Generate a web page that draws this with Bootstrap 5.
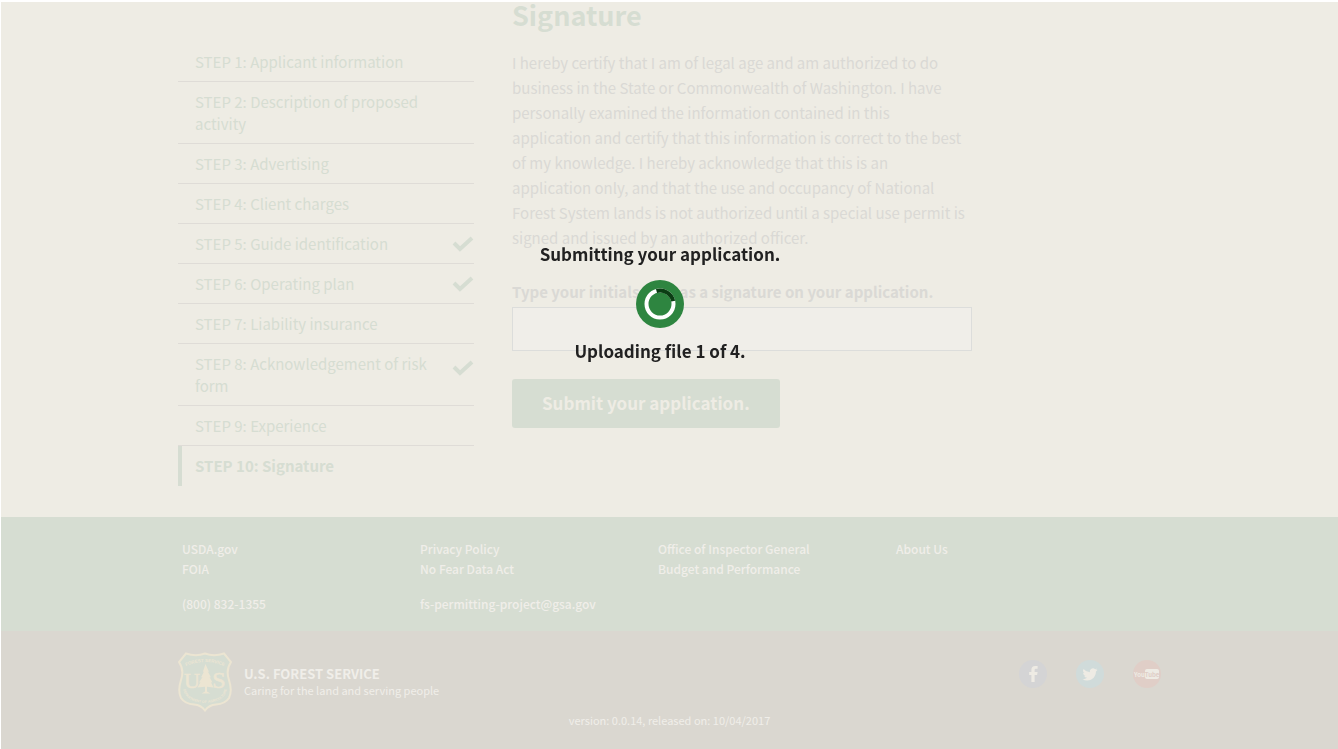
<!DOCTYPE html>
<html lang="en">
<head>
<meta charset="utf-8">
<meta name="viewport" content="width=device-width, initial-scale=1">
<title>Signature - U.S. Forest Service permits</title>
<link href="https://cdn.jsdelivr.net/npm/bootstrap@5.3.0/dist/css/bootstrap.min.css" rel="stylesheet">
<style>
  :root {
    --sand: #eeece4;
    --leaf: #d6ddd2;
    --stone: #dad7d0;
    --ink: #dad9d5;
    --paper: #f0eee9;
  }
  body {
    font-family: "Noto Sans CJK SC", "Open Sans", sans-serif;
    font-size: 15px;
    line-height: 25px;
    color: var(--ink);
    background: #fff;
    padding: 2px 0 0 1px;
    min-height: 100vh;
  }
  a { color: inherit; text-decoration: none; }
  .page { background: var(--sand); }
  .wrap { width: 100%; max-width: 983px; margin: 0 auto; }
  .form-area { gap: 38px; padding-bottom: 31px; }
  .steps { width: 296px; padding-top: 40px; color: var(--leaf); }
  .steps a {
    min-height: 40px;
    padding: 9px 0 8px 17px;
    line-height: 22px;
    border-bottom: 1px solid #dfdcd7;
  }
  .steps a span { max-width: 246px; }
  .steps a svg { margin: 2px 0; }
  .steps a.current {
    padding-left: 13px;
    border-left: 4px solid var(--leaf);
    border-bottom: 0;
    font-weight: 700;
  }
  .signature { flex: 0 1 460px; }
  .signature h1 { font-size: 27px; line-height: 26px; font-weight: 700; color: var(--leaf); margin-bottom: 22px; }
  .signature p { margin-bottom: 29px; padding-right: 4px; }
  .signature label { font-weight: 700; margin-bottom: 3px; }
  .signature .form-control { height: 44px; border: 1px solid #dcdddb; border-radius: 0; background: var(--paper); }
  .btn-submit, .btn-submit:hover {
    margin-top: 28px;
    height: 49px;
    padding: 0 30px 2px;
    border: 0;
    border-radius: 3px;
    background: var(--leaf);
    color: var(--sand);
    font-size: 17px;
    font-weight: 700;
  }
  .foot-links { background: var(--leaf); color: var(--paper); font-size: 12px; font-weight: 500; line-height: 20px; padding: 22px 0 17px; }
  .foot-links .row { max-width: 952px; row-gap: 15px; }
  .foot-links .row > div { padding: 0 4px; }
  .foot-brand { background: var(--stone); color: var(--paper); padding: 21px 0 19px; line-height: 17px; }
  .brand-name { font-size: 13px; font-weight: 700; }
  .brand-motto, .version { font-size: 11px; }
  .social { gap: 29px; margin-top: 8px; }
  .social svg, .brand svg { display: block; }
  .busy { position: fixed; inset: 0; padding: 241px 18px 0 0; color: #212121; font-size: 17px; font-weight: 700; z-index: 10; }
  .spinner { margin: 14px 0 10px; }
</style>
</head>
<body class="d-flex flex-column">
<main class="page">
  <div class="wrap d-flex form-area">
    <nav class="steps d-flex flex-column flex-shrink-0" aria-label="Application steps">
      <a href="#s1">STEP 1: Applicant information</a>
      <a href="#s2"><span class="d-block">STEP 2: Description of proposed activity</span></a>
      <a href="#s3">STEP 3: Advertising</a>
      <a href="#s4">STEP 4: Client charges</a>
      <a href="#s5" class="d-flex justify-content-between align-items-start"><span>STEP 5: Guide identification</span><svg width="22" height="18" viewBox="0 0 22 18" class="flex-shrink-0"><path d="M2 8l6 6L20 3" fill="none" stroke="#d6ddd2" stroke-width="4"/></svg></a>
      <a href="#s6" class="d-flex justify-content-between align-items-start"><span>STEP 6: Operating plan</span><svg width="22" height="18" viewBox="0 0 22 18" class="flex-shrink-0"><path d="M2 8l6 6L20 3" fill="none" stroke="#d6ddd2" stroke-width="4"/></svg></a>
      <a href="#s7">STEP 7: Liability insurance</a>
      <a href="#s8" class="d-flex justify-content-between align-items-start"><span>STEP 8: Acknowledgement of risk form</span><svg width="22" height="26" viewBox="0 0 22 26" class="flex-shrink-0"><path d="M2 12l6 6L20 7" fill="none" stroke="#d6ddd2" stroke-width="4"/></svg></a>
      <a href="#s9">STEP 9: Experience</a>
      <a href="#s10" class="current" aria-current="step">STEP 10: Signature</a>
    </nav>
    <form class="signature">
      <h1>Signature</h1>
      <p>I hereby certify that I am of legal age and am authorized to do business in the State or Commonwealth of Washington. I have personally examined the information contained in this application and certify that this information is correct to the best of my knowledge. I hereby acknowledge that this is an application only, and that the use and occupancy of National Forest System lands is not authorized until a special use permit is signed and issued by an authorized officer.</p>
      <label for="initials" class="d-block">Type your initials here as a signature on your application.</label>
      <input id="initials" type="text" class="form-control">
      <button type="button" class="btn btn-submit">Submit your application.</button>
    </form>
  </div>
</main>
<footer class="flex-grow-1 d-flex flex-column">
  <div class="foot-links">
    <div class="wrap">
      <div class="row gx-0">
        <div class="col-3"><a class="d-block" href="#usda">USDA.gov</a><a class="d-block" href="#foia">FOIA</a></div>
        <div class="col-3"><a class="d-block" href="#privacy">Privacy Policy</a><a class="d-block" href="#nofear">No Fear Data Act</a></div>
        <div class="col-3"><a class="d-block" href="#oig">Office of Inspector General</a><a class="d-block" href="#budget">Budget and Performance</a></div>
        <div class="col-3"><a class="d-block" href="#about">About Us</a></div>
        <div class="col-3"><a href="tel:8008321355">(800) 832-1355</a></div>
        <div class="col-3"><a href="mailto:fs-permitting-project@gsa.gov">fs-permitting-project@gsa.gov</a></div>
      </div>
    </div>
  </div>
  <div class="foot-brand flex-grow-1">
    <div class="wrap d-flex justify-content-between align-items-start">
      <div class="brand d-flex align-items-center">
        <svg width="54" height="60" viewBox="0 0 54 60" role="img" aria-label="Forest Service shield">
          <path d="M8 1.500Q18 5 27 1.500Q36 5 46 1.500L53 10Q47.500 18 51 28Q54.500 39 51 46Q47 52 38 52.500Q31 53 27 58.500Q23 53 16 52.500Q7 52 3 46Q-.5 39 3 28Q6.500 18 1 10Z" fill="#d6ddd2" stroke="#ece5d2" stroke-width="2"/>
          <path id="arcTop" d="M6 15Q27 5 48 15" fill="none"/>
          <path id="arcLow" d="M5 34Q5 50 27 51Q49 50 49 34" fill="none"/>
          <g fill="#ece5d2">
            <text font-family="Liberation Sans" font-size="4.500" font-weight="700" text-anchor="middle"><textPath href="#arcTop" startOffset="50%">FOREST SERVICE</textPath></text>
            <text font-family="Liberation Sans" font-size="3.500" font-weight="700" text-anchor="middle"><textPath href="#arcLow" startOffset="50%">DEPARTMENT OF AGRICULTURE</textPath></text>
            <text x="14" y="36" font-family="Liberation Serif" font-size="22" text-anchor="middle" stroke="#ece5d2" stroke-width=".6">U</text>
            <text x="41" y="36" font-family="Liberation Serif" font-size="24" text-anchor="middle" stroke="#ece5d2" stroke-width=".6">S</text>
            <path d="M27.500 12l3.500 8-1.200-.5 3.200 6-1.500-.5 3 5.500-1.500-.3 2.500 5.300-6.500-.8v4.800l3.500 2h-9l3.500-2v-4.800l-7.500.8 3-5.300-1.500.3 3.500-5.500-1.500.5 3-6-1.200.5z"/>
          </g>
        </svg>
        <div class="ms-2 ps-1">
          <div class="brand-name">U.S. FOREST SERVICE</div>
          <div class="brand-motto">Caring for the land and serving people</div>
        </div>
      </div>
      <div class="social d-flex">
        <a href="#facebook" aria-label="Facebook"><svg width="28" height="28" viewBox="0 0 28 28"><circle cx="14" cy="14" r="14" fill="#d4d4d5"/><path d="M15.600 22v-7h2.500l.5-2.900h-3v-1.800c0-1 .4-1.500 1.500-1.500h1.500V6.100h-2.300c-2.800 0-3.900 1.500-3.900 3.900v2.100h-2.200V15h2.200v7z" fill="#eeebe4"/></svg></a>
        <a href="#twitter" aria-label="Twitter"><svg width="28" height="28" viewBox="0 0 28 28"><circle cx="14" cy="14" r="14" fill="#d0dbda"/><g transform="translate(6.500 6.500) scale(.94)"><path d="M5 15c6 0 9.300-5 9.300-9.300v-.4A6.600 6.600 0 0 0 16 3.500a6.500 6.500 0 0 1-1.900.5 3.300 3.300 0 0 0 1.400-1.800 6.500 6.500 0 0 1-2.100.8 3.300 3.300 0 0 0-5.600 3A9.300 9.300 0 0 1 1.100 2.600a3.300 3.300 0 0 0 1 4.400 3.200 3.200 0 0 1-1.500-.4 3.300 3.300 0 0 0 2.600 3.200 3.200 3.200 0 0 1-1.500.1 3.300 3.300 0 0 0 3.100 2.200A6.600 6.600 0 0 1 0 13.500 9.300 9.300 0 0 0 5 15z" fill="#eeebe4"/></g></svg></a>
        <a href="#youtube" aria-label="YouTube"><svg width="28" height="28" viewBox="0 0 28 28" overflow="visible"><circle cx="14" cy="14" r="14" fill="#e0cec7"/><rect x="12" y="9" width="14" height="10" rx="2" fill="#eeebe4"/><text x="1" y="17" font-size="6" font-weight="700" fill="#eeebe4">You</text><text x="19" y="17" text-anchor="middle" font-size="6" font-weight="700" fill="#e0cec7">Tube</text></svg></a>
      </div>
    </div>
    <div class="version text-center">version: 0.0.14, released on: 10/04/2017</div>
  </div>
</footer>
<div class="busy d-flex flex-column align-items-center" role="status">
  <div>Submitting your application.</div>
  <svg class="spinner" width="48" height="48" viewBox="0 0 48 48">
    <circle cx="24" cy="24" r="24" fill="#2e8540"/>
    <circle cx="24" cy="24" r="13.500" fill="none" stroke="#fff" stroke-width="4"/>
    <path d="M20.500 11A13.500 13.500 0 0 1 37.200 21.200" fill="none" stroke="#0b3d14" stroke-width="4"/>
  </svg>
  <div>Uploading file 1 of 4.</div>
</div>
<script src="https://cdn.jsdelivr.net/npm/bootstrap@5.3.0/dist/js/bootstrap.bundle.min.js"></script>
</body>
</html>
